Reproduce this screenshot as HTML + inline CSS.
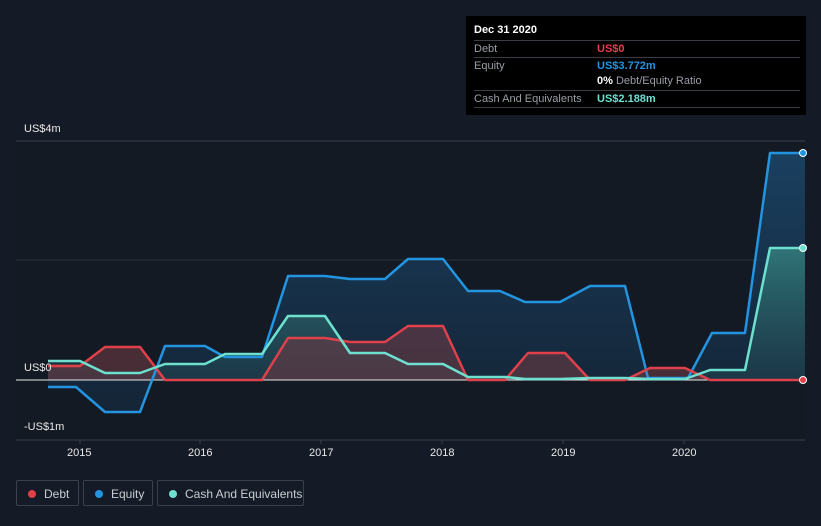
<!DOCTYPE html>
<html><head><meta charset="utf-8"><style>
body{margin:0;width:821px;height:526px;background:#151b26;font-family:"Liberation Sans",sans-serif;overflow:hidden;position:relative}
.tt{position:absolute;left:466px;top:16px;width:340px;height:99px;background:#000;color:#fff;font-size:11px}
.row{position:absolute;left:8px;width:326px;border-top:1px solid #3a3d44;height:16px;line-height:16px}
.lab{color:#9a9ea6;position:absolute;left:0}
.val{position:absolute;left:123px;font-weight:bold}
.ax{position:absolute;color:#e8e8e8;font-size:11px}
.leg{position:absolute;top:480px;height:26px;border:1px solid #3b414c;border-radius:2px;color:#c9ccd2;font-size:12px;line-height:26px;box-sizing:border-box}
.dot{display:inline-block;width:8px;height:8px;border-radius:50%;margin:0 8px 0 11px;vertical-align:-0px}
</style></head><body>
<svg width="821" height="526" style="position:absolute;left:0;top:0">
<defs>
<linearGradient id="ge" x1="0" y1="0" x2="0" y2="1"><stop offset="0" stop-color="#1b4a70" stop-opacity=".8"/><stop offset="1" stop-color="#15304a" stop-opacity=".5"/></linearGradient>
<linearGradient id="gc" x1="0" y1="0" x2="0" y2="1"><stop offset="0" stop-color="#3a8f88" stop-opacity=".7"/><stop offset="1" stop-color="#24505a" stop-opacity=".4"/></linearGradient>
</defs>
<rect x="16" y="141" width="789" height="299" fill="#141a24"/>
<line x1="16" y1="141" x2="805" y2="141" stroke="#3a3f48"/>
<line x1="16" y1="260" x2="805" y2="260" stroke="#2c313a"/>
<line x1="16" y1="440" x2="805" y2="440" stroke="#3a3f48"/>
<g stroke="#3a3f48"><line x1="80" y1="440" x2="80" y2="444"/><line x1="200" y1="440" x2="200" y2="444"/><line x1="321" y1="440" x2="321" y2="444"/><line x1="442" y1="440" x2="442" y2="444"/><line x1="563" y1="440" x2="563" y2="444"/><line x1="684" y1="440" x2="684" y2="444"/></g>
<path d="M48 387L76 387L105 412L140 412L165 346L205 346L225 357L262 357L288 276L325 276L350 279L385 279L408 259L443 259L468 291L500 291L525 302L560 302L590 286L625 286L648 378L688 378L712 333L745 333L770 153L805 153L805 380L48 380Z" fill="url(#ge)"/>
<path d="M48 361L80 361L105 373L140 373L165 364L205 364L225 354L262 354L288 316L325 316L350 353L385 353L408 364L443 364L468 377L505 377L525 379L560 379L590 378L625 378L650 379L685 379L710 370L745 370L770 248L805 248L805 380L48 380Z" fill="url(#gc)"/>
<path d="M48 366L80 366L105 347L140 347L165 380L262 380L288 338L325 338L350 342L385 342L408 326L443 326L468 380L505 380L528 353L565 353L590 380L625 380L650 368L685 368L710 380L805 380L48 380Z" fill="#6b3a45" fill-opacity=".6"/>
<line x1="16" y1="380" x2="805" y2="380" stroke="#e8e8e8"/>
<g fill="none" stroke-width="2.5" stroke-linejoin="round">
<path d="M48 387L76 387L105 412L140 412L165 346L205 346L225 357L262 357L288 276L325 276L350 279L385 279L408 259L443 259L468 291L500 291L525 302L560 302L590 286L625 286L648 378L688 378L712 333L745 333L770 153L805 153" stroke="#2394e0"/>
<path d="M48 366L80 366L105 347L140 347L165 380L262 380L288 338L325 338L350 342L385 342L408 326L443 326L468 380L505 380L528 353L565 353L590 380L625 380L650 368L685 368L710 380L805 380" stroke="#e0404a"/>
<path d="M48 361L80 361L105 373L140 373L165 364L205 364L225 354L262 354L288 316L325 316L350 353L385 353L408 364L443 364L468 377L505 377L525 379L560 379L590 378L625 378L650 379L685 379L710 370L745 370L770 248L805 248" stroke="#6de0cf"/>
</g>
<circle cx="803" cy="153" r="3.5" fill="#2394e0" stroke="#fff"/>
<circle cx="803" cy="248" r="3.5" fill="#6de0cf" stroke="#fff"/>
<circle cx="803" cy="380" r="3.5" fill="#e0404a" stroke="#fff"/>
</svg>
<div class="ax" style="left:24px;top:123px">US$4m</div>
<div class="ax" style="left:24px;top:362px">US$0</div>
<div class="ax" style="left:24px;top:421px">-US$1m</div>
<div class="ax" style="left:67px;top:447px">2015</div>
<div class="ax" style="left:188px;top:447px">2016</div>
<div class="ax" style="left:309px;top:447px">2017</div>
<div class="ax" style="left:430px;top:447px">2018</div>
<div class="ax" style="left:551px;top:447px">2019</div>
<div class="ax" style="left:672px;top:447px">2020</div>
<div class="tt">
<div style="position:absolute;left:8px;top:8px;font-weight:bold">Dec 31 2020</div>
<div class="row" style="top:24px"><span class="lab">Debt</span><span class="val" style="color:#e0404a">US$0</span></div>
<div class="row" style="top:41px"><span class="lab">Equity</span><span class="val" style="color:#2394e0">US$3.772m</span></div>
<div class="row" style="top:57px;border-top:none"><span class="val" style="color:#fff">0% <span style="color:#9a9ea6;font-weight:normal">Debt/Equity Ratio</span></span></div>
<div class="row" style="top:74px;border-bottom:1px solid #3a3d44"><span class="lab">Cash And Equivalents</span><span class="val" style="color:#6de0cf">US$2.188m</span></div>
</div>
<div class="leg" style="left:16px;width:63px"><span class="dot" style="background:#e0404a"></span>Debt</div>
<div class="leg" style="left:83px;width:70px"><span class="dot" style="background:#2394e0"></span>Equity</div>
<div class="leg" style="left:157px;width:147px"><span class="dot" style="background:#6de0cf"></span>Cash And Equivalents</div>
</body></html>
